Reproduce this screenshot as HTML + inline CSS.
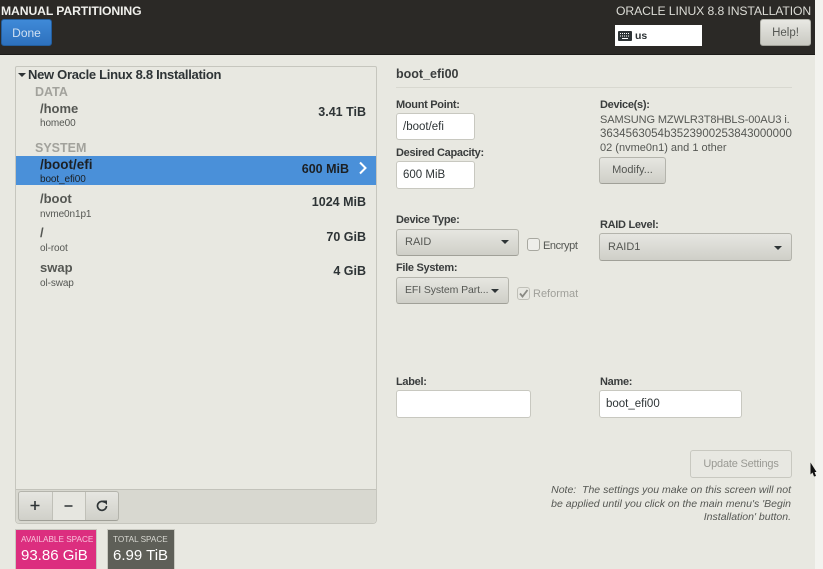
<!DOCTYPE html>
<html><head><meta charset="utf-8">
<style>
html,body{margin:0;padding:0;background:#fff}
#p{position:relative;width:823px;height:569px;overflow:hidden;background:#f3f3ef;font-family:"Liberation Sans",sans-serif;color:#2e3436}
#m{position:absolute;left:0;top:0;width:815px;height:569px;background:#e8e8e1}
#h{position:absolute;left:0;top:0;width:815px;height:55px;background:#2b2926;border-bottom:1px solid #1c1b19;box-sizing:border-box}
.t{position:absolute;white-space:nowrap;line-height:14px}
.b{font-weight:bold}
.f{position:absolute;box-sizing:border-box;background:#fff;border:1px solid #c8c8c0;border-radius:3px;font-size:11.5px;line-height:27px;padding-left:6px;color:#2e3436}
.btn{position:absolute;box-sizing:border-box;border:1px solid #b4b4ac;border-radius:3px;background:linear-gradient(#e6e6e1,#cfcfc8);font-size:11px;color:#555753;border-bottom-color:#a0a098;white-space:nowrap}
.lab{font-size:11px;font-weight:bold;color:#3a3d3d;letter-spacing:-.3px}
.arr{position:absolute;width:0;height:0;border-left:4px solid transparent;border-right:4px solid transparent;border-top:4px solid #2e3436}
.n{font-size:13px;font-weight:bold;color:#555753}
.s{font-size:10px;color:#555753;letter-spacing:-.1px}
.z{font-size:12.5px;font-weight:bold;color:#2e3436;text-align:right;width:120px}
.d{font-size:11px;color:#555753}
.o{font-size:10.5px;font-style:italic;color:#555753;text-align:right}
</style></head><body>
<div id="p"><div id="m"></div>
<div id="h"></div>
<div class="t b" style="left:1px;top:4px;font-size:12.2px;color:#f0f0ec;letter-spacing:-.1px">MANUAL PARTITIONING</div>
<div class="btn" style="left:1px;top:19px;width:51px;height:27px;background:linear-gradient(#3f8ad8,#2d71bd);border-color:#235e9e;border-radius:3px;color:#cfe0f2;text-align:center;line-height:26px;font-size:12px">Done</div>
<div class="t" style="left:616px;top:4px;font-size:12.2px;color:#dcdcd6;letter-spacing:-.1px">ORACLE LINUX 8.8 INSTALLATION</div>
<div style="position:absolute;left:615px;top:25px;width:87px;height:21px;background:#fff"></div>
<svg style="position:absolute;left:618px;top:31px" width="14" height="10"><rect width="14" height="10" rx="1" fill="#2e3436"/><path d="M2 2.500h10M2 5h10" stroke="#fff" stroke-width="1" stroke-dasharray="1 1"/><path d="M4 7.500h6" stroke="#fff"/></svg>
<div class="t b" style="left:635px;top:29px;font-size:10.5px;color:#2e3436">us</div>
<div class="btn" style="left:760px;top:19px;width:51px;height:27px;background:linear-gradient(#e8e8e3,#c9c9c2);text-align:center;line-height:26px;font-size:11.5px">Help!</div>

<div style="position:absolute;left:15px;top:66px;width:362px;height:458px;box-sizing:border-box;border:1px solid #c6c6be;border-radius:2px 2px 4px 4px"></div>
<div style="position:absolute;left:16px;top:489px;width:360px;height:34px;background:#d8d8d0;border-top:1px solid #c2c2ba;box-sizing:border-box;border-radius:0 0 4px 4px"></div>
<div class="arr" style="left:18px;top:73px"></div>
<div class="t b" style="left:28px;top:68px;font-size:13px;color:#2e3436;letter-spacing:-.3px">New Oracle Linux 8.8 Installation</div>
<div class="t b" style="left:35px;top:85px;font-size:12.5px;color:#a2a29c">DATA</div>
<div class="t n" style="left:40px;top:102px">/home</div>
<div class="t s" style="left:40px;top:117px">home00</div>
<div class="t z" style="left:246px;top:105px">3.41 TiB</div>
<div class="t b" style="left:35px;top:141px;font-size:12.5px;color:#a2a29c">SYSTEM</div>
<div style="position:absolute;left:16px;top:156px;width:360px;height:29px;background:#4a90d9"></div>
<div class="t n" style="left:40px;top:158px;color:#1c2024;font-size:13.5px">/boot/efi</div>
<div class="t s" style="left:40px;top:173px;color:#1c2024">boot_efi00</div>
<div class="t z" style="left:229px;top:162px;color:#1c2024">600 MiB</div>
<svg style="position:absolute;left:358px;top:161px" width="10" height="14"><path d="M2 1.500l5.500 5.500-5.500 5.500" fill="none" stroke="#fff" stroke-width="2"/></svg>
<div class="t n" style="left:40px;top:192px">/boot</div>
<div class="t s" style="left:40px;top:208px">nvme0n1p1</div>
<div class="t z" style="left:246px;top:195px">1024 MiB</div>
<div class="t n" style="left:40px;top:226px">/</div>
<div class="t s" style="left:40px;top:242px">ol-root</div>
<div class="t z" style="left:246px;top:230px">70 GiB</div>
<div class="t n" style="left:40px;top:261px">swap</div>
<div class="t s" style="left:40px;top:277px">ol-swap</div>
<div class="t z" style="left:246px;top:264px">4 GiB</div>

<div class="btn" style="left:18px;top:491px;width:101px;height:30px;background:linear-gradient(#e6e6e1,#d0d0c9)"></div>
<div style="position:absolute;left:52px;top:492px;width:34px;height:28px;background:#e6e6e0;border-left:1px solid #c0c0b8;border-right:1px solid #c0c0b8;box-sizing:border-box"></div>
<svg style="position:absolute;left:18px;top:491px" width="101" height="30"><path d="M12.500 14.500h9M17 10v9M46.500 15h8" stroke="#2e3436" stroke-width="1.600" fill="none"/><path d="M87 11.500a4.500 4.500 0 1 0 1.500 3.500" stroke="#2e3436" stroke-width="1.700" fill="none"/><path d="M84.500 9.500h4.500v4.500z" fill="#2e3436"/></svg>

<div style="position:absolute;left:15px;top:529px;width:82px;height:40px;background:#dc2e7f;border:1px solid #c8c8c0;border-bottom:0;box-sizing:border-box"></div>
<div class="t" style="left:21px;top:533px;font-size:8.200px;color:#f8c4db">AVAILABLE SPACE</div>
<div class="t" style="left:21px;top:547px;font-size:15px;line-height:17px;color:#fff">93.86 GiB</div>
<div style="position:absolute;left:107px;top:529px;width:68px;height:40px;background:#5e5f58;border:1px solid #c8c8c0;border-bottom:0;box-sizing:border-box"></div>
<div class="t" style="left:113px;top:533px;font-size:8.200px;color:#d8d8d2">TOTAL SPACE</div>
<div class="t" style="left:113px;top:547px;font-size:15px;line-height:17px;color:#fff">6.99 TiB</div>

<div class="t b" style="left:396px;top:67px;font-size:12.500px;color:#3a3d3d">boot_efi00</div>
<div style="position:absolute;left:396px;top:87px;width:396px;height:1px;background:#d8d8d0"></div>

<div class="t lab" style="left:396px;top:98px">Mount Point:</div>
<div class="f" style="left:396px;top:113px;width:79px;height:27px">/boot/efi</div>
<div class="t lab" style="left:396px;top:146px">Desired Capacity:</div>
<div class="f" style="left:396px;top:161px;width:79px;height:28px">600 MiB</div>
<div class="t lab" style="left:600px;top:98px">Device(s):</div>
<div class="t d" style="left:600px;top:113px;letter-spacing:-.1px">SAMSUNG MZWLR3T8HBLS-00AU3 i.</div>
<div class="t d" style="left:600px;top:127px;font-size:11.500px">3634563054b3523900253843000000</div>
<div class="t d" style="left:600px;top:141px">02 (nvme0n1) and 1 other</div>
<div class="btn" style="left:599px;top:157px;width:67px;height:27px;text-align:center;line-height:24px">Modify...</div>

<div class="t lab" style="left:396px;top:213px">Device Type:</div>
<div class="btn" style="left:396px;top:229px;width:123px;height:27px;line-height:25px;padding-left:8px">RAID</div>
<div class="arr" style="left:501px;top:240px"></div>
<div style="position:absolute;left:527px;top:238px;width:13px;height:13px;box-sizing:border-box;border:1px solid #a8a8a0;border-radius:3px;background:#eeeeea"></div>
<div class="t" style="left:543px;top:239px;font-size:11px;letter-spacing:-.4px;color:#555753">Encrypt</div>
<div class="t lab" style="left:396px;top:261px">File System:</div>
<div class="btn" style="left:396px;top:277px;width:113px;height:27px;line-height:25px;padding-left:8px;font-size:10.500px;letter-spacing:-.1px">EFI System Part...</div>
<div class="arr" style="left:491px;top:289px"></div>
<div style="position:absolute;left:517px;top:287px;width:13px;height:13px;box-sizing:border-box;border:1px solid #c0c0b8;border-radius:3px;background:#e8e8e2"></div>
<svg style="position:absolute;left:517px;top:287px" width="13" height="13"><path d="M3 6.500l2.500 3 5-6.500" fill="none" stroke="#8a8a84" stroke-width="1.800"/></svg>
<div class="t" style="left:533px;top:287px;font-size:11px;color:#a0a09a">Reformat</div>
<div class="t lab" style="left:600px;top:218px">RAID Level:</div>
<div class="btn" style="left:599px;top:233px;width:193px;height:28px;line-height:26px;padding-left:8px">RAID1</div>
<div class="arr" style="left:774px;top:246px"></div>

<div class="t lab" style="left:396px;top:375px">Label:</div>
<div class="f" style="left:396px;top:390px;width:135px;height:28px"></div>
<div class="t lab" style="left:600px;top:375px">Name:</div>
<div class="f" style="left:599px;top:390px;width:143px;height:28px">boot_efi00</div>
<div class="btn" style="left:690px;top:450px;width:102px;height:28px;background:#e8e8e2;border-color:#c8c8c0;color:#9a9a94;text-align:center;line-height:26px;letter-spacing:-.2px">Update Settings</div>
<div class="t o" style="right:32px;top:483px">Note: &nbsp;The settings you make on this screen will not</div>
<div class="t o" style="right:32px;top:497px">be applied until you click on the main menu's 'Begin</div>
<div class="t o" style="right:32px;top:510px">Installation' button.</div>
<svg style="position:absolute;left:810px;top:462px" width="7" height="16"><path d="M0.500 0.500v12l2-2 1.500 4 2-.500-1.500-4h2z" fill="#111"/></svg>
</div>
</body></html>
